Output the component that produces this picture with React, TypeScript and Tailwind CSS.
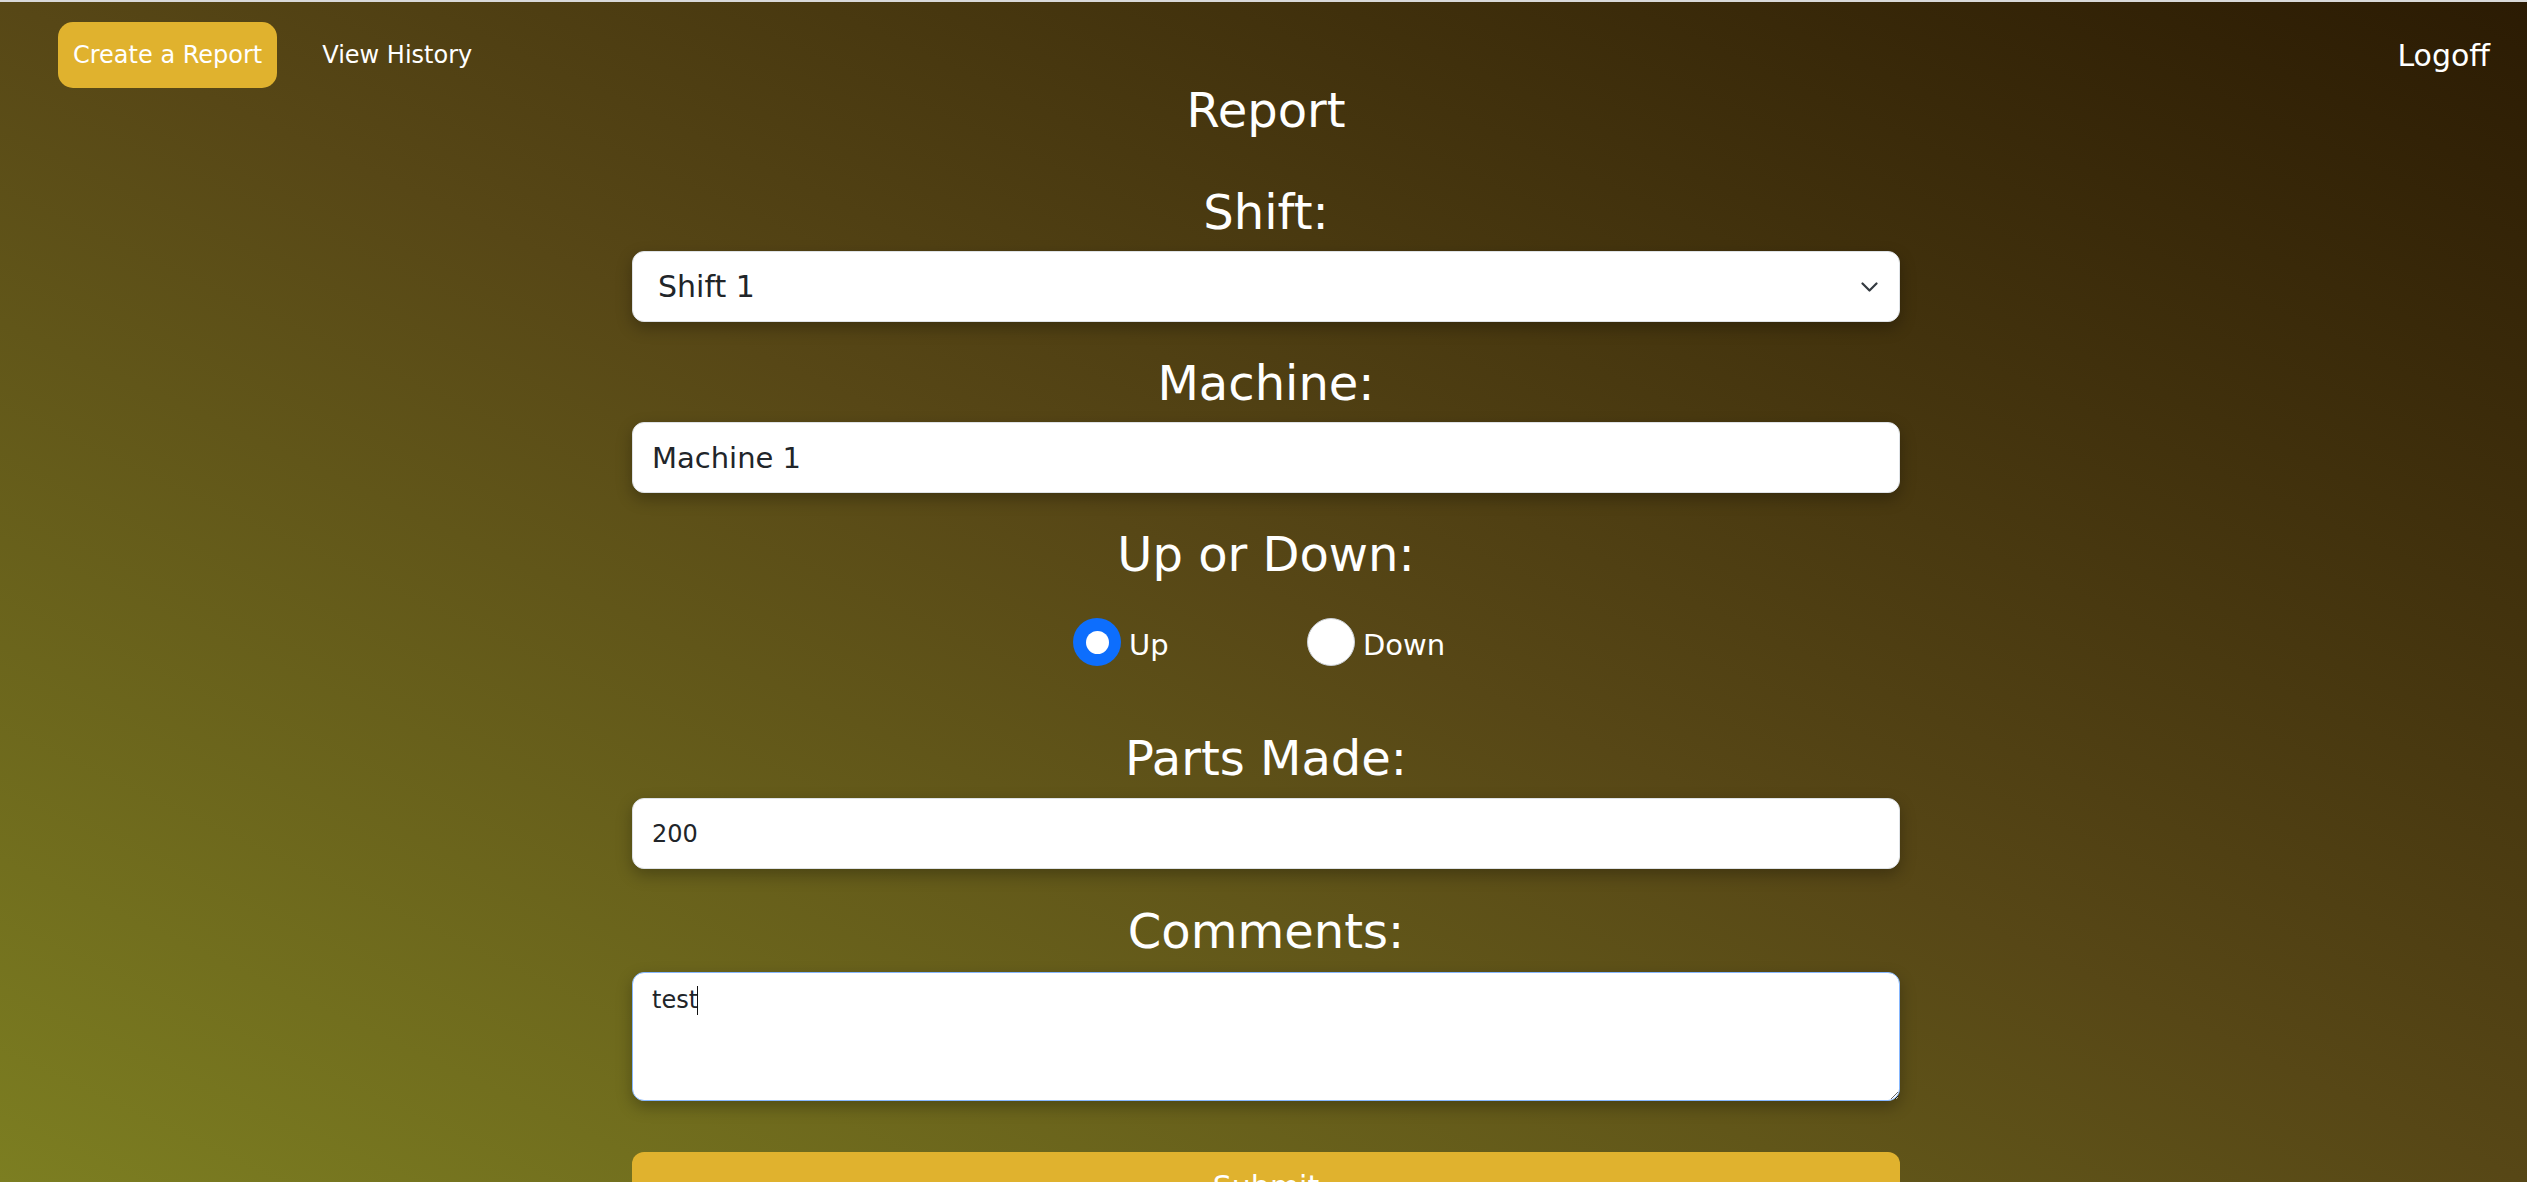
import { useState } from 'react';

export default function App() {
    const [shift, setShift] = useState('Shift 1');
    const [machine, setMachine] = useState('Machine 1');
    const [status, setStatus] = useState<'up' | 'down'>('up');
    const [parts, setParts] = useState('200');
    const [comments, setComments] = useState('test');

    const labelClass = 'block text-[48px] leading-[56px] text-white';
    const fieldClass =
        'block w-full h-[71px] rounded-[12px] border border-[#dee2e6] bg-white text-[#212529] outline-none shadow-[0_6px_16px_rgba(0,0,0,0.28)]';

    return (
        <div className="h-screen overflow-hidden bg-[linear-gradient(to_top_right,#7c7e21_0%,#574716_50%,#2b1b03_100%)] font-['DejaVu_Sans','Verdana',sans-serif]">
            <div className="h-[2px] bg-[#d9d9d9]"></div>

            {/* Top nav */}
            <nav className="flex h-[66px] items-center justify-between mt-[20px] pl-[58px] pr-[37px]">
                <div className="flex items-center">
                    <a className="rounded-[15px] bg-[#e0b22e] px-[15px] py-[15px] text-[24px] leading-[36px] text-white">
                        Create a Report
                    </a>
                    <a className="ml-[45px] text-[24px] leading-[36px] text-white">View History</a>
                </div>
                <a className="text-[30px] leading-[45px] text-white">Logoff</a>
            </nav>

            {/* Form */}
            <form className="ml-[632px] w-[1268px] text-center" onSubmit={(e) => e.preventDefault()}>
                <h2 className="-mt-[6px] text-[48px] leading-[56px] text-white">Report</h2>

                <label className={`${labelClass} mt-[46px]`}>Shift:</label>
                <div className="relative mt-[11px]">
                    <select
                        value={shift}
                        onChange={(e) => setShift(e.target.value)}
                        className={`${fieldClass} appearance-none pl-[25px] text-[30px]`}
                    >
                        <option>Shift 1</option>
                        <option>Shift 2</option>
                        <option>Shift 3</option>
                    </select>
                    <svg
                        className="pointer-events-none absolute right-[22px] top-1/2 h-[10px] w-[17px] -translate-y-1/2"
                        viewBox="0 0 17 10"
                        fill="none"
                        stroke="#343a40"
                        strokeWidth="2.2"
                        strokeLinecap="round"
                        strokeLinejoin="round"
                    >
                        <path d="M1.5 1.5l7 7 7-7" />
                    </svg>
                </div>

                <label className={`${labelClass} mt-[33px]`}>Machine:</label>
                <input
                    value={machine}
                    onChange={(e) => setMachine(e.target.value)}
                    className={`${fieldClass} mt-[11px] px-[19px] text-[29px]`}
                />

                <label className={`${labelClass} mt-[33px]`}>Up or Down:</label>
                <div className="mt-[36px] flex h-[48px] items-center pl-[441px]">
                    <button type="button" onClick={() => setStatus('up')} className="flex w-[234px] items-center gap-[8px]">
                        <span
                            className={`flex h-[48px] w-[48px] items-center justify-center rounded-full ${status === 'up' ? 'bg-[#0d6efd]' : 'border border-[#c9ced4] bg-white'}`}
                        >
                            {status === 'up' && <span className="h-[23px] w-[23px] rounded-full bg-white"></span>}
                        </span>
                        <span className="mt-[6px] text-[29px] leading-[45px] text-white">Up</span>
                    </button>
                    <button type="button" onClick={() => setStatus('down')} className="flex items-center gap-[8px]">
                        <span
                            className={`flex h-[48px] w-[48px] items-center justify-center rounded-full ${status === 'down' ? 'bg-[#0d6efd]' : 'border border-[#c9ced4] bg-white'}`}
                        >
                            {status === 'down' && <span className="h-[23px] w-[23px] rounded-full bg-white"></span>}
                        </span>
                        <span className="mt-[6px] text-[29px] leading-[45px] text-white">Down</span>
                    </button>
                </div>

                <label className={`${labelClass} mt-[64px]`}>Parts Made:</label>
                <input
                    value={parts}
                    onChange={(e) => setParts(e.target.value)}
                    className={`${fieldClass} mt-[12px] px-[19px] text-[24px]`}
                />

                <label className={`${labelClass} mt-[34px]`}>Comments:</label>
                <div className="relative mt-[13px]">
                    <textarea
                        value={comments}
                        onChange={(e) => setComments(e.target.value)}
                        className="block h-[129px] w-full rounded-[12px] border border-[#86b7fe] bg-white px-[19px] py-[9px] text-left text-[24px] leading-[36px] text-[#212529] outline-none shadow-[0_6px_16px_rgba(0,0,0,0.28)]"
                    />
                    {/* text caret */}
                    <span className="pointer-events-none absolute left-[65px] top-[14px] h-[29px] w-px bg-[#111]"></span>
                </div>

                <button
                    type="submit"
                    className="mt-[51px] block w-full rounded-[12px] bg-[#e0b22e] pt-[12px] pb-[14px] text-[30px] leading-[45px] text-white"
                >
                    Submit
                </button>
            </form>
        </div>
    );
}
